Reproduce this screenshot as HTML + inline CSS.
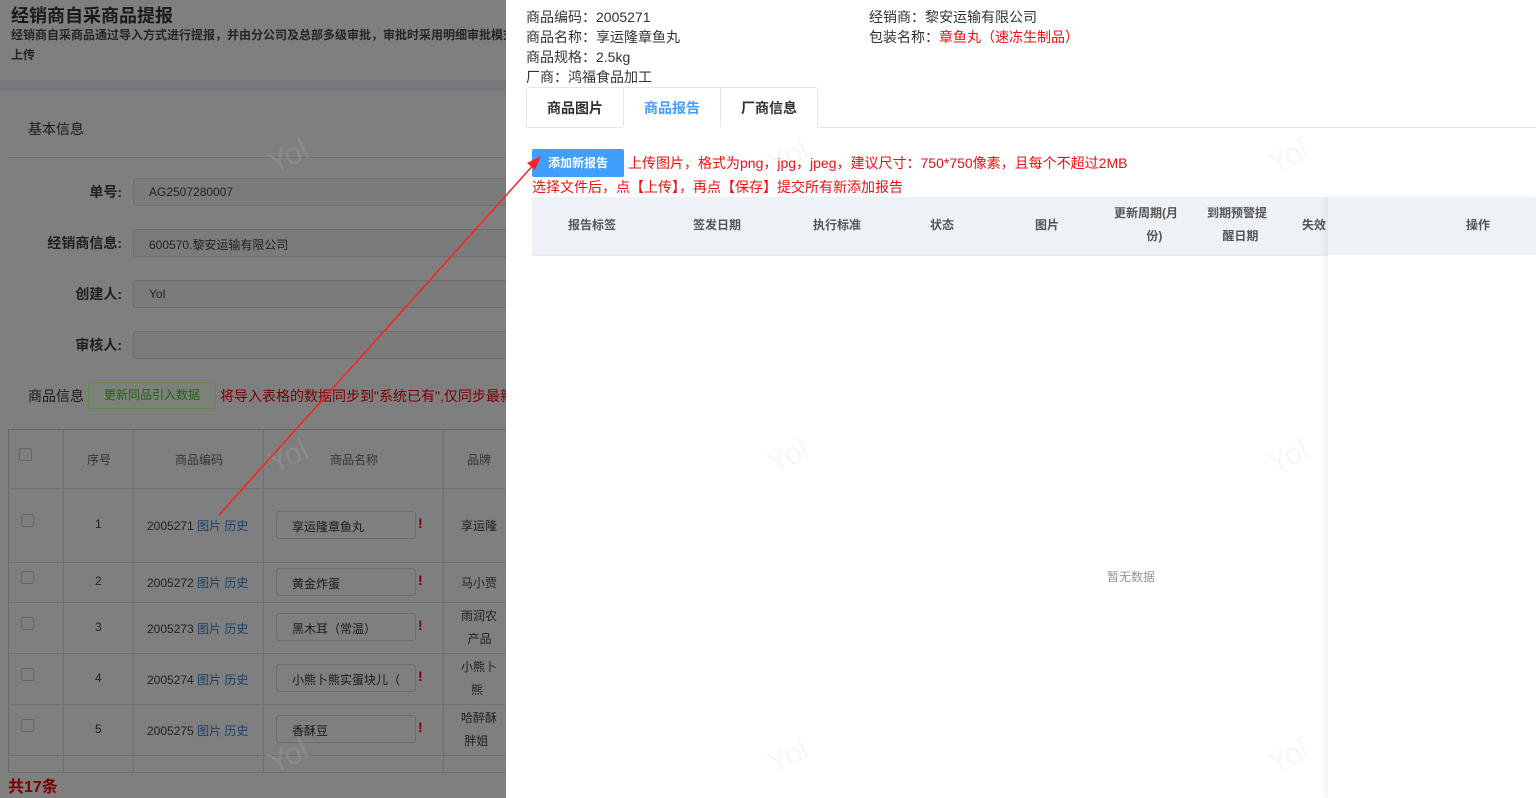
<!DOCTYPE html>
<html><head><meta charset="utf-8"><style>
*{margin:0;padding:0;box-sizing:border-box}
body{width:1536px;height:798px;overflow:hidden;position:relative;background:#7f7f7f;font-family:"Liberation Sans","Noto Sans CJK SC",sans-serif;color:#333}
.a{position:absolute;white-space:nowrap}
.l{color:#1a1a1a}
.inp{position:absolute;left:133px;width:400px;height:28px;border:1px solid #6e6e6e;border-radius:3px;background:#7b7b7b;font-size:12px;color:#222;padding:6px 15px}
.lab{position:absolute;right:1414px;font-size:14px;font-weight:bold;color:#1f1f1f}
.hl{position:absolute;background:#6f6f6f}
.c{font-size:12px;color:#222;position:absolute;white-space:nowrap}
.blu{color:#1d3f66}
.cb{position:absolute;left:21px;width:13px;height:13px;border:1px solid #666;border-radius:2px}
.nm{position:absolute;left:276px;width:140px;height:28px;border:1px solid #6d6d6d;border-radius:3px;font-size:12px;color:#1a1a1a;padding:6px 15px;white-space:nowrap;overflow:hidden}
.ex{position:absolute;left:418px;color:#7a0000;font-weight:bold;font-size:14px}
.dr{position:absolute;left:506px;top:0;width:1030px;height:798px;background:#fff}
.t{position:absolute;font-size:14px;color:#333;white-space:nowrap}
.th{position:absolute;font-size:12px;font-weight:bold;color:#555;text-align:center;white-space:nowrap;line-height:23px}
.wm{position:absolute;font-size:30px;transform:rotate(-25deg)}
</style></head><body>
<div class="a l" style="left:11px;top:2px;font-size:18px;font-weight:bold">经销商自采商品提报</div>
<div class="a" style="left:11px;top:26px;font-size:12px;font-weight:bold;color:#262626">经销商自采商品通过导入方式进行提报，并由分公司及总部多级审批，审批时采用明细审批模式</div>
<div class="a" style="left:11px;top:46px;font-size:12px;font-weight:bold;color:#262626">上传</div>
<div style="position:absolute;left:0;top:80px;width:506px;height:11px;background:#76787c"></div>
<div class="a l" style="left:28px;top:119px;font-size:14px">基本信息</div>
<div class="hl" style="left:8px;top:157px;width:498px;height:1px"></div>
<div class="lab" style="top:182px">单号:</div><div class="inp" style="top:178px">AG2507280007</div>
<div class="lab" style="top:233px">经销商信息:</div><div class="inp" style="top:229px">600570.黎安运输有限公司</div>
<div class="lab" style="top:284px">创建人:</div><div class="inp" style="top:280px">Yol</div>
<div class="lab" style="top:335px">审核人:</div><div class="inp" style="top:331px"></div>
<div class="a l" style="left:28px;top:386px;font-size:14px">商品信息</div>
<div style="position:absolute;left:88px;top:382px;width:128px;height:27px;border:1px solid #5d8a4a;border-radius:3px;background:#7b8279;color:#2b5e1a;font-size:12px;text-align:center;line-height:25px">更新同品引入数据</div>
<div class="a" style="left:220px;top:386px;font-size:14px;color:#7a0000">将导入表格的数据同步到"系统已有",仅同步最新</div>
<div style="position:absolute;left:8px;top:429px;width:498px;height:343px;border-left:1px solid #6a6a6a;border-top:1px solid #6a6a6a"></div>
<div class="hl" style="left:8px;top:488px;width:498px;height:1px"></div>
<div class="hl" style="left:8px;top:562px;width:498px;height:1px"></div>
<div class="hl" style="left:8px;top:602px;width:498px;height:1px"></div>
<div class="hl" style="left:8px;top:653px;width:498px;height:1px"></div>
<div class="hl" style="left:8px;top:704px;width:498px;height:1px"></div>
<div class="hl" style="left:8px;top:755px;width:498px;height:1px"></div>
<div class="hl" style="left:8px;top:772px;width:498px;height:1px"></div>
<div class="hl" style="left:63px;top:430px;width:1px;height:342px"></div>
<div class="hl" style="left:133px;top:430px;width:1px;height:342px"></div>
<div class="hl" style="left:263px;top:430px;width:1px;height:342px"></div>
<div class="hl" style="left:443px;top:430px;width:1px;height:342px"></div>
<div class="c" style="left:87px;top:451px;color:#333">序号</div>
<div class="c" style="left:175px;top:451px;color:#333">商品编码</div>
<div class="c" style="left:330px;top:451px;color:#333">商品名称</div>
<div class="c" style="left:467px;top:451px;color:#333">品牌</div>
<div class="cb" style="top:448px;left:19px"></div>
<div class="cb" style="top:514px"></div><div class="cb" style="top:571px"></div><div class="cb" style="top:617px"></div><div class="cb" style="top:668px"></div><div class="cb" style="top:719px"></div>
<div class="c" style="left:95px;top:517px">1</div><div class="c" style="left:95px;top:574px">2</div><div class="c" style="left:95px;top:620px">3</div><div class="c" style="left:95px;top:671px">4</div><div class="c" style="left:95px;top:722px">5</div>
<div class="c" style="left:147px;top:517px">2005271 <span class="blu">图片 历史</span></div>
<div class="c" style="left:147px;top:574px">2005272 <span class="blu">图片 历史</span></div>
<div class="c" style="left:147px;top:620px">2005273 <span class="blu">图片 历史</span></div>
<div class="c" style="left:147px;top:671px">2005274 <span class="blu">图片 历史</span></div>
<div class="c" style="left:147px;top:722px">2005275 <span class="blu">图片 历史</span></div>
<div class="nm" style="top:511px">享运隆章鱼丸</div><div class="ex" style="top:515px">!</div>
<div class="nm" style="top:568px">黄金炸蛋</div><div class="ex" style="top:572px">!</div>
<div class="nm" style="top:613px">黑木耳（常温）</div><div class="ex" style="top:617px">!</div>
<div class="nm" style="top:664px">小熊卜熊实蛋块儿（</div><div class="ex" style="top:668px">!</div>
<div class="nm" style="top:715px">香酥豆</div><div class="ex" style="top:719px">!</div>
<div class="c" style="left:461px;top:517px">享运隆</div><div class="c" style="left:461px;top:574px">马小贾</div>
<div class="c" style="left:461px;top:605px;line-height:23px">雨润农<br>&nbsp;&nbsp;产品</div>
<div class="c" style="left:461px;top:656px;line-height:23px">小熊卜<br>&nbsp;&nbsp;&nbsp;熊</div>
<div class="c" style="left:461px;top:707px;line-height:23px">哈醉酥<br>&nbsp;胖姐</div>
<div class="a" style="left:8px;top:773px;font-size:16px;font-weight:bold;color:#7a0000">共17条</div>
<div class="wm" style="left:268px;top:140px;color:rgba(150,150,150,.5)">Yol</div>
<div class="wm" style="left:268px;top:440px;color:rgba(150,150,150,.5)">Yol</div>
<div class="wm" style="left:268px;top:740px;color:rgba(150,150,150,.5)">Yol</div>
<div class="dr">
<div class="t" style="left:20px;top:7px">商品编码：2005271</div>
<div class="t" style="left:20px;top:27px">商品名称：享运隆章鱼丸</div>
<div class="t" style="left:20px;top:47px">商品规格：2.5kg</div>
<div class="t" style="left:20px;top:67px">厂商：鸿福食品加工</div>
<div class="t" style="left:363px;top:7px">经销商：黎安运输有限公司</div>
<div class="t" style="left:363px;top:27px">包装名称：<span style="color:#f01010">章鱼丸（速冻生制品）</span></div>
<div style="position:absolute;left:20px;top:127px;width:1010px;height:1px;background:#e4e7ed"></div>
<div style="position:absolute;left:20px;top:87px;width:292px;height:41px;border:1px solid #e4e7ed;border-bottom:none;border-radius:3px 3px 0 0;background:#fff"></div>
<div style="position:absolute;left:117px;top:87px;width:1px;height:40px;background:#e4e7ed"></div>
<div style="position:absolute;left:214px;top:87px;width:1px;height:40px;background:#e4e7ed"></div>
<div style="position:absolute;left:21px;top:127px;width:96px;height:1px;background:#e4e7ed"></div>
<div style="position:absolute;left:118px;top:127px;width:96px;height:1px;background:#fff"></div>
<div class="t" style="left:41px;top:98px;font-weight:bold;color:#303133">商品图片</div>
<div class="t" style="left:138px;top:98px;font-weight:bold;color:#409eff">商品报告</div>
<div class="t" style="left:235px;top:98px;font-weight:bold;color:#303133">厂商信息</div>
<div style="position:absolute;left:26px;top:149px;width:92px;height:28px;background:#409eff;border-radius:2px;color:#fff;font-size:12px;font-weight:bold;text-align:center;line-height:28px">添加新报告</div>
<div class="t" style="left:122px;top:153px;color:#f01010">上传图片，格式为png，jpg，jpeg，建议尺寸：750*750像素，且每个不超过2MB</div>
<div class="t" style="left:26px;top:177px;color:#f01010">选择文件后，点【上传】，再点【保存】提交所有新添加报告</div>
<div style="position:absolute;left:26px;top:197px;width:1004px;height:59px;background:#eef1f6;border-bottom:1px solid #e6e9ef"></div>
<div class="th" style="left:62px;top:214px">报告标签</div>
<div class="th" style="left:187px;top:214px">签发日期</div>
<div class="th" style="left:307px;top:214px">执行标准</div>
<div class="th" style="left:424px;top:214px">状态</div>
<div class="th" style="left:529px;top:214px">图片</div>
<div class="th" style="left:608px;top:202px">更新周期(月<br>&nbsp;&nbsp;&nbsp;&nbsp;&nbsp;份)</div>
<div class="th" style="left:701px;top:202px">到期预警提<br>&nbsp;&nbsp;醒日期</div>
<div class="th" style="left:796px;top:214px">失效</div>
<div style="position:absolute;left:822px;top:197px;width:208px;height:601px;background:#fff;box-shadow:-4px 0 6px rgba(0,0,0,.05)"></div>
<div style="position:absolute;left:822px;top:197px;width:208px;height:58px;background:#eef1f6"></div>
<div class="th" style="left:960px;top:214px">操作</div>
<div class="t" style="left:601px;top:568px;font-size:12px;color:#909399">暂无数据</div>
<div class="wm" style="left:262px;top:140px;color:rgba(200,200,200,.15)">Yol</div>
<div class="wm" style="left:762px;top:140px;color:rgba(200,200,200,.15)">Yol</div>
<div class="wm" style="left:262px;top:440px;color:rgba(200,200,200,.15)">Yol</div>
<div class="wm" style="left:762px;top:440px;color:rgba(200,200,200,.15)">Yol</div>
<div class="wm" style="left:262px;top:740px;color:rgba(200,200,200,.15)">Yol</div>
<div class="wm" style="left:762px;top:740px;color:rgba(200,200,200,.15)">Yol</div>
</div>
<svg style="position:absolute;left:0;top:0" width="1536" height="798">
<line x1="219" y1="515" x2="536" y2="162" stroke="#ff2020" stroke-width="1.5"/>
<polygon points="541,156 527,163 535,170" fill="#ff2020"/>
</svg>
</body></html>
